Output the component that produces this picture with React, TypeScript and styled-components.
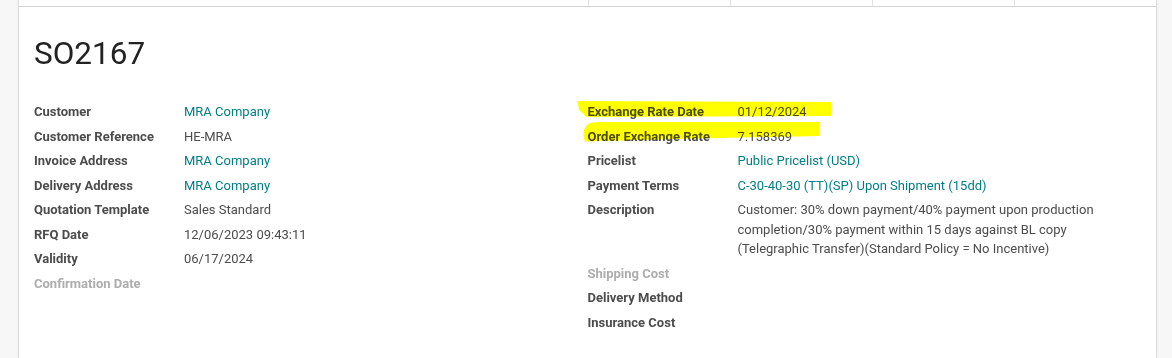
import React from 'react';
import styled, { createGlobalStyle } from 'styled-components';

type Field = {
  label: string;
  value?: string;
  link?: boolean;
  muted?: boolean;
};

const leftFields: Field[] = [
  { label: 'Customer', value: 'MRA Company', link: true },
  { label: 'Customer Reference', value: 'HE-MRA' },
  { label: 'Invoice Address', value: 'MRA Company', link: true },
  { label: 'Delivery Address', value: 'MRA Company', link: true },
  { label: 'Quotation Template', value: 'Sales Standard' },
  { label: 'RFQ Date', value: '12/06/2023 09:43:11' },
  { label: 'Validity', value: '06/17/2024' },
  { label: 'Confirmation Date', muted: true },
];

const rightFields: Field[] = [
  { label: 'Exchange Rate Date', value: '01/12/2024' },
  { label: 'Order Exchange Rate', value: '7.158369' },
  { label: 'Pricelist', value: 'Public Pricelist (USD)', link: true },
  { label: 'Payment Terms', value: 'C-30-40-30 (TT)(SP) Upon Shipment (15dd)', link: true },
  {
    label: 'Description',
    value:
      'Customer: 30% down payment/40% payment upon production completion/30% payment within 15 days against BL copy (Telegraphic Transfer)(Standard Policy = No Incentive)',
  },
  { label: 'Shipping Cost', muted: true },
  { label: 'Delivery Method' },
  { label: 'Insurance Cost' },
];

const App: React.FC = () => {
  return (
    <>
      <GlobalStyle />
      <Page>
        <Sheet>
          <ButtonBox>
            <StatButton />
            <StatButton />
            <StatButton />
            <StatButton />
          </ButtonBox>
          <SheetBody>
            <Title>SO2167</Title>
            <Groups>
              <FieldGroup>
                {leftFields.map((f) => (
                  <FieldRow key={f.label} field={f} />
                ))}
              </FieldGroup>
              <FieldGroup>
                <Highlighter viewBox="0 0 260 46" width={260} height={46}>
                  <path
                    d="M1 1 L120 1.5 L255 2 L256 9 L255 16 L130 16.5 L11 17 Q4 12 3 9 Z"
                    fill="#ffff00"
                  />
                  <path
                    d="M14 23 Q18 21.5 30 22 L244 22 L243 29 L243 36 L120 38.5 L9 41.5 Q7 37 7.5 32 Q9 25 14 23 Z"
                    fill="#ffff00"
                  />
                </Highlighter>
                {rightFields.map((f) => (
                  <FieldRow key={f.label} field={f} />
                ))}
              </FieldGroup>
            </Groups>
          </SheetBody>
        </Sheet>
      </Page>
    </>
  );
};

const FieldRow: React.FC<{ field: Field }> = ({ field }) => (
  <>
    <Label muted={field.muted}>{field.label}</Label>
    <Value link={field.link}>{field.value}</Value>
  </>
);

export default App;

const GlobalStyle = createGlobalStyle`
  html, body {
    margin: 0;
    padding: 0;
    background: #f7f7f7;
  }
  body {
    font-family: Roboto, 'Liberation Sans', sans-serif;
    font-size: 13px;
    color: #4c4c4c;
  }
`;

const Page = styled.div`
  display: flex;
  padding: 0 15px 0 18px;
  height: 358px;
  overflow: hidden;
`;

const Sheet = styled.div`
  flex: 1;
  background: #fff;
  border-left: 1px solid #dcdcdc;
  border-right: 1px solid #dcdcdc;
  box-shadow: 0 0 3px rgba(0, 0, 0, 0.06);
`;

const ButtonBox = styled.div`
  display: flex;
  justify-content: flex-end;
  height: 6px;
  border-bottom: 1px solid #d4d4d4;
`;

const StatButton = styled.div`
  box-sizing: border-box;
  width: 142px;
  border-left: 1px solid #e2e2e2;
`;

const SheetBody = styled.div`
  padding: 0 15px;
`;

const Title = styled.h1`
  margin: 28px 0 29px;
  font-family: Roboto, 'Liberation Sans', sans-serif;
  font-size: 31.5px;
  font-weight: 400;
  line-height: 38px;
  color: #222;
`;

const Groups = styled.div`
  display: grid;
  grid-template-columns: 1fr 1fr;
`;

const FieldGroup = styled.div`
  position: relative;
  display: grid;
  grid-template-columns: 150px 1fr;
  row-gap: 5px;
  align-content: start;
  line-height: 19.5px;
`;

const Label = styled.div<{ muted?: boolean }>`
  font-weight: 700;
  color: ${(p) => (p.muted ? '#adadad' : '#4c4c4c')};
  white-space: nowrap;
`;

const Value = styled.div<{ link?: boolean }>`
  color: ${(p) => (p.link ? '#017e84' : '#4c4c4c')};
  min-height: 19.5px;
`;

const Highlighter = styled.svg`
  position: absolute;
  left: -12px;
  top: -2px;
  mix-blend-mode: multiply;
  pointer-events: none;
`;
